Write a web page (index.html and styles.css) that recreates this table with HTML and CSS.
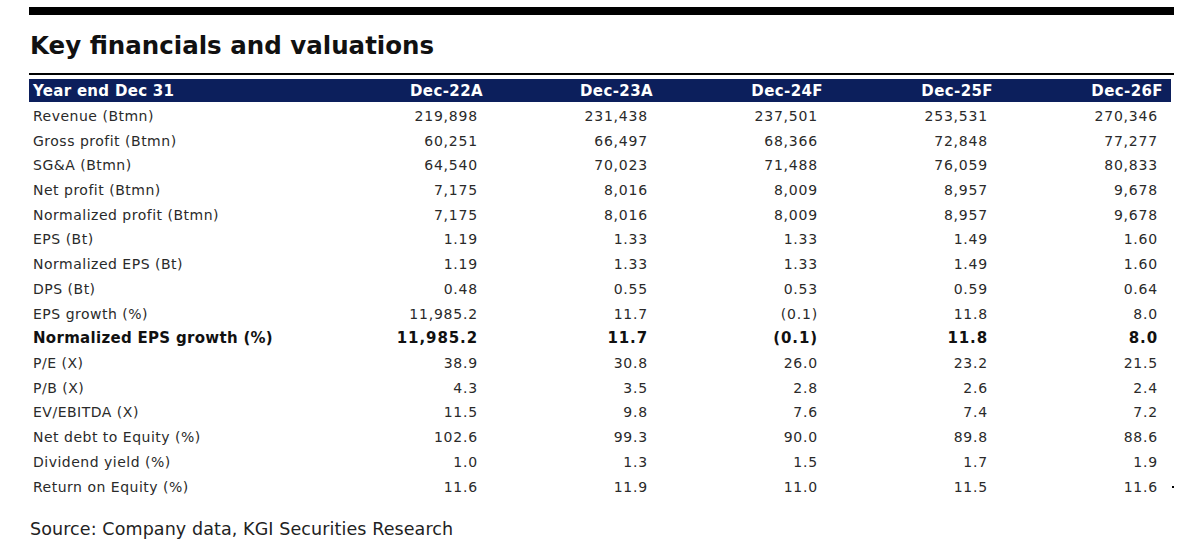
FILE: index.html
```html
<!DOCTYPE html>
<html>
<head>
<meta charset="utf-8">
<link rel="stylesheet" href="styles.css">
</head>
<body>
<div class="page">
  <div class="topbar"></div>
  <h1 class="title">Key financials and valuations</h1>
  <div class="rule"></div>
  <div class="table">
    <div class="row head">
      <div class="lab">Year end Dec 31</div>
      <div class="val">Dec-22A</div><div class="val">Dec-23A</div><div class="val">Dec-24F</div><div class="val">Dec-25F</div><div class="val">Dec-26F</div>
    </div>
    <div class="row"><div class="lab">Revenue (Btmn)</div><div class="val">219,898</div><div class="val">231,438</div><div class="val">237,501</div><div class="val">253,531</div><div class="val">270,346</div></div>
    <div class="row"><div class="lab">Gross profit (Btmn)</div><div class="val">60,251</div><div class="val">66,497</div><div class="val">68,366</div><div class="val">72,848</div><div class="val">77,277</div></div>
    <div class="row"><div class="lab">SG&amp;A (Btmn)</div><div class="val">64,540</div><div class="val">70,023</div><div class="val">71,488</div><div class="val">76,059</div><div class="val">80,833</div></div>
    <div class="row"><div class="lab">Net profit (Btmn)</div><div class="val">7,175</div><div class="val">8,016</div><div class="val">8,009</div><div class="val">8,957</div><div class="val">9,678</div></div>
    <div class="row"><div class="lab">Normalized profit (Btmn)</div><div class="val">7,175</div><div class="val">8,016</div><div class="val">8,009</div><div class="val">8,957</div><div class="val">9,678</div></div>
    <div class="row"><div class="lab">EPS (Bt)</div><div class="val">1.19</div><div class="val">1.33</div><div class="val">1.33</div><div class="val">1.49</div><div class="val">1.60</div></div>
    <div class="row"><div class="lab">Normalized EPS (Bt)</div><div class="val">1.19</div><div class="val">1.33</div><div class="val">1.33</div><div class="val">1.49</div><div class="val">1.60</div></div>
    <div class="row"><div class="lab">DPS (Bt)</div><div class="val">0.48</div><div class="val">0.55</div><div class="val">0.53</div><div class="val">0.59</div><div class="val">0.64</div></div>
    <div class="row"><div class="lab">EPS growth (%)</div><div class="val">11,985.2</div><div class="val">11.7</div><div class="val">(0.1)</div><div class="val">11.8</div><div class="val">8.0</div></div>
    <div class="row bold"><div class="lab">Normalized EPS growth (%)</div><div class="val">11,985.2</div><div class="val">11.7</div><div class="val">(0.1)</div><div class="val">11.8</div><div class="val">8.0</div></div>
    <div class="row"><div class="lab">P/E (X)</div><div class="val">38.9</div><div class="val">30.8</div><div class="val">26.0</div><div class="val">23.2</div><div class="val">21.5</div></div>
    <div class="row"><div class="lab">P/B (X)</div><div class="val">4.3</div><div class="val">3.5</div><div class="val">2.8</div><div class="val">2.6</div><div class="val">2.4</div></div>
    <div class="row"><div class="lab">EV/EBITDA (X)</div><div class="val">11.5</div><div class="val">9.8</div><div class="val">7.6</div><div class="val">7.4</div><div class="val">7.2</div></div>
    <div class="row"><div class="lab">Net debt to Equity (%)</div><div class="val">102.6</div><div class="val">99.3</div><div class="val">90.0</div><div class="val">89.8</div><div class="val">88.6</div></div>
    <div class="row"><div class="lab">Dividend yield (%)</div><div class="val">1.0</div><div class="val">1.3</div><div class="val">1.5</div><div class="val">1.7</div><div class="val">1.9</div></div>
    <div class="row"><div class="lab">Return on Equity (%)</div><div class="val">11.6</div><div class="val">11.9</div><div class="val">11.0</div><div class="val">11.5</div><div class="val">11.6</div><span class="dot"></span></div>
  </div>
  <p class="source">Source: Company data, KGI Securities Research</p>
</div>
</body>
</html>
```
FILE: styles.css
```css
html, body {
  margin: 0;
  padding: 0;
  background: #ffffff;
}
.page {
  padding: 7px 0 0 29px;
  width: 1145px;
  font-family: "DejaVu Sans", Verdana, sans-serif;
  color: #222222;
}
.topbar {
  height: 8px;
  background: #000000;
}
.title {
  margin: 0;
  height: 58px;
  padding-left: 1px;
  font-size: 24.5px;
  font-weight: bold;
  line-height: 61px;
  color: #111111;
}
.rule {
  height: 2px;
  background: #000000;
}
.table {
  margin-top: 4px;
  width: 1142px;
}
.row {
  position: relative;
  display: grid;
  grid-template-columns: 284px repeat(5, 170px);
  height: 24.73px;
  align-items: center;
  font-size: 14px;
  letter-spacing: 0.5px;
  color: #2a2a2a;
}
.row .lab {
  padding-left: 4px;
}
.row .val {
  text-align: right;
  padding-right: 5px;
  letter-spacing: 0.8px;
}
.row.head {
  height: 23px;
  margin-bottom: 1.5px;
  background: #0c1f5c;
  color: #ffffff;
  font-weight: bold;
  font-size: 15px;
  letter-spacing: 0.3px;
}
.row.head .val {
  padding-right: 0;
  letter-spacing: 0.4px;
}
.row.bold {
  font-weight: bold;
  font-size: 15px;
  letter-spacing: 0.3px;
  color: #111111;
}
.row.bold .val {
  letter-spacing: 0.9px;
}
.dot {
  position: absolute;
  left: 1143px;
  top: 12px;
  width: 2px;
  height: 2px;
  background: #000000;
}
.source {
  margin: 20px 0 0 1px;
  font-size: 17.5px;
  letter-spacing: 0.1px;
  color: #222222;
}
```
